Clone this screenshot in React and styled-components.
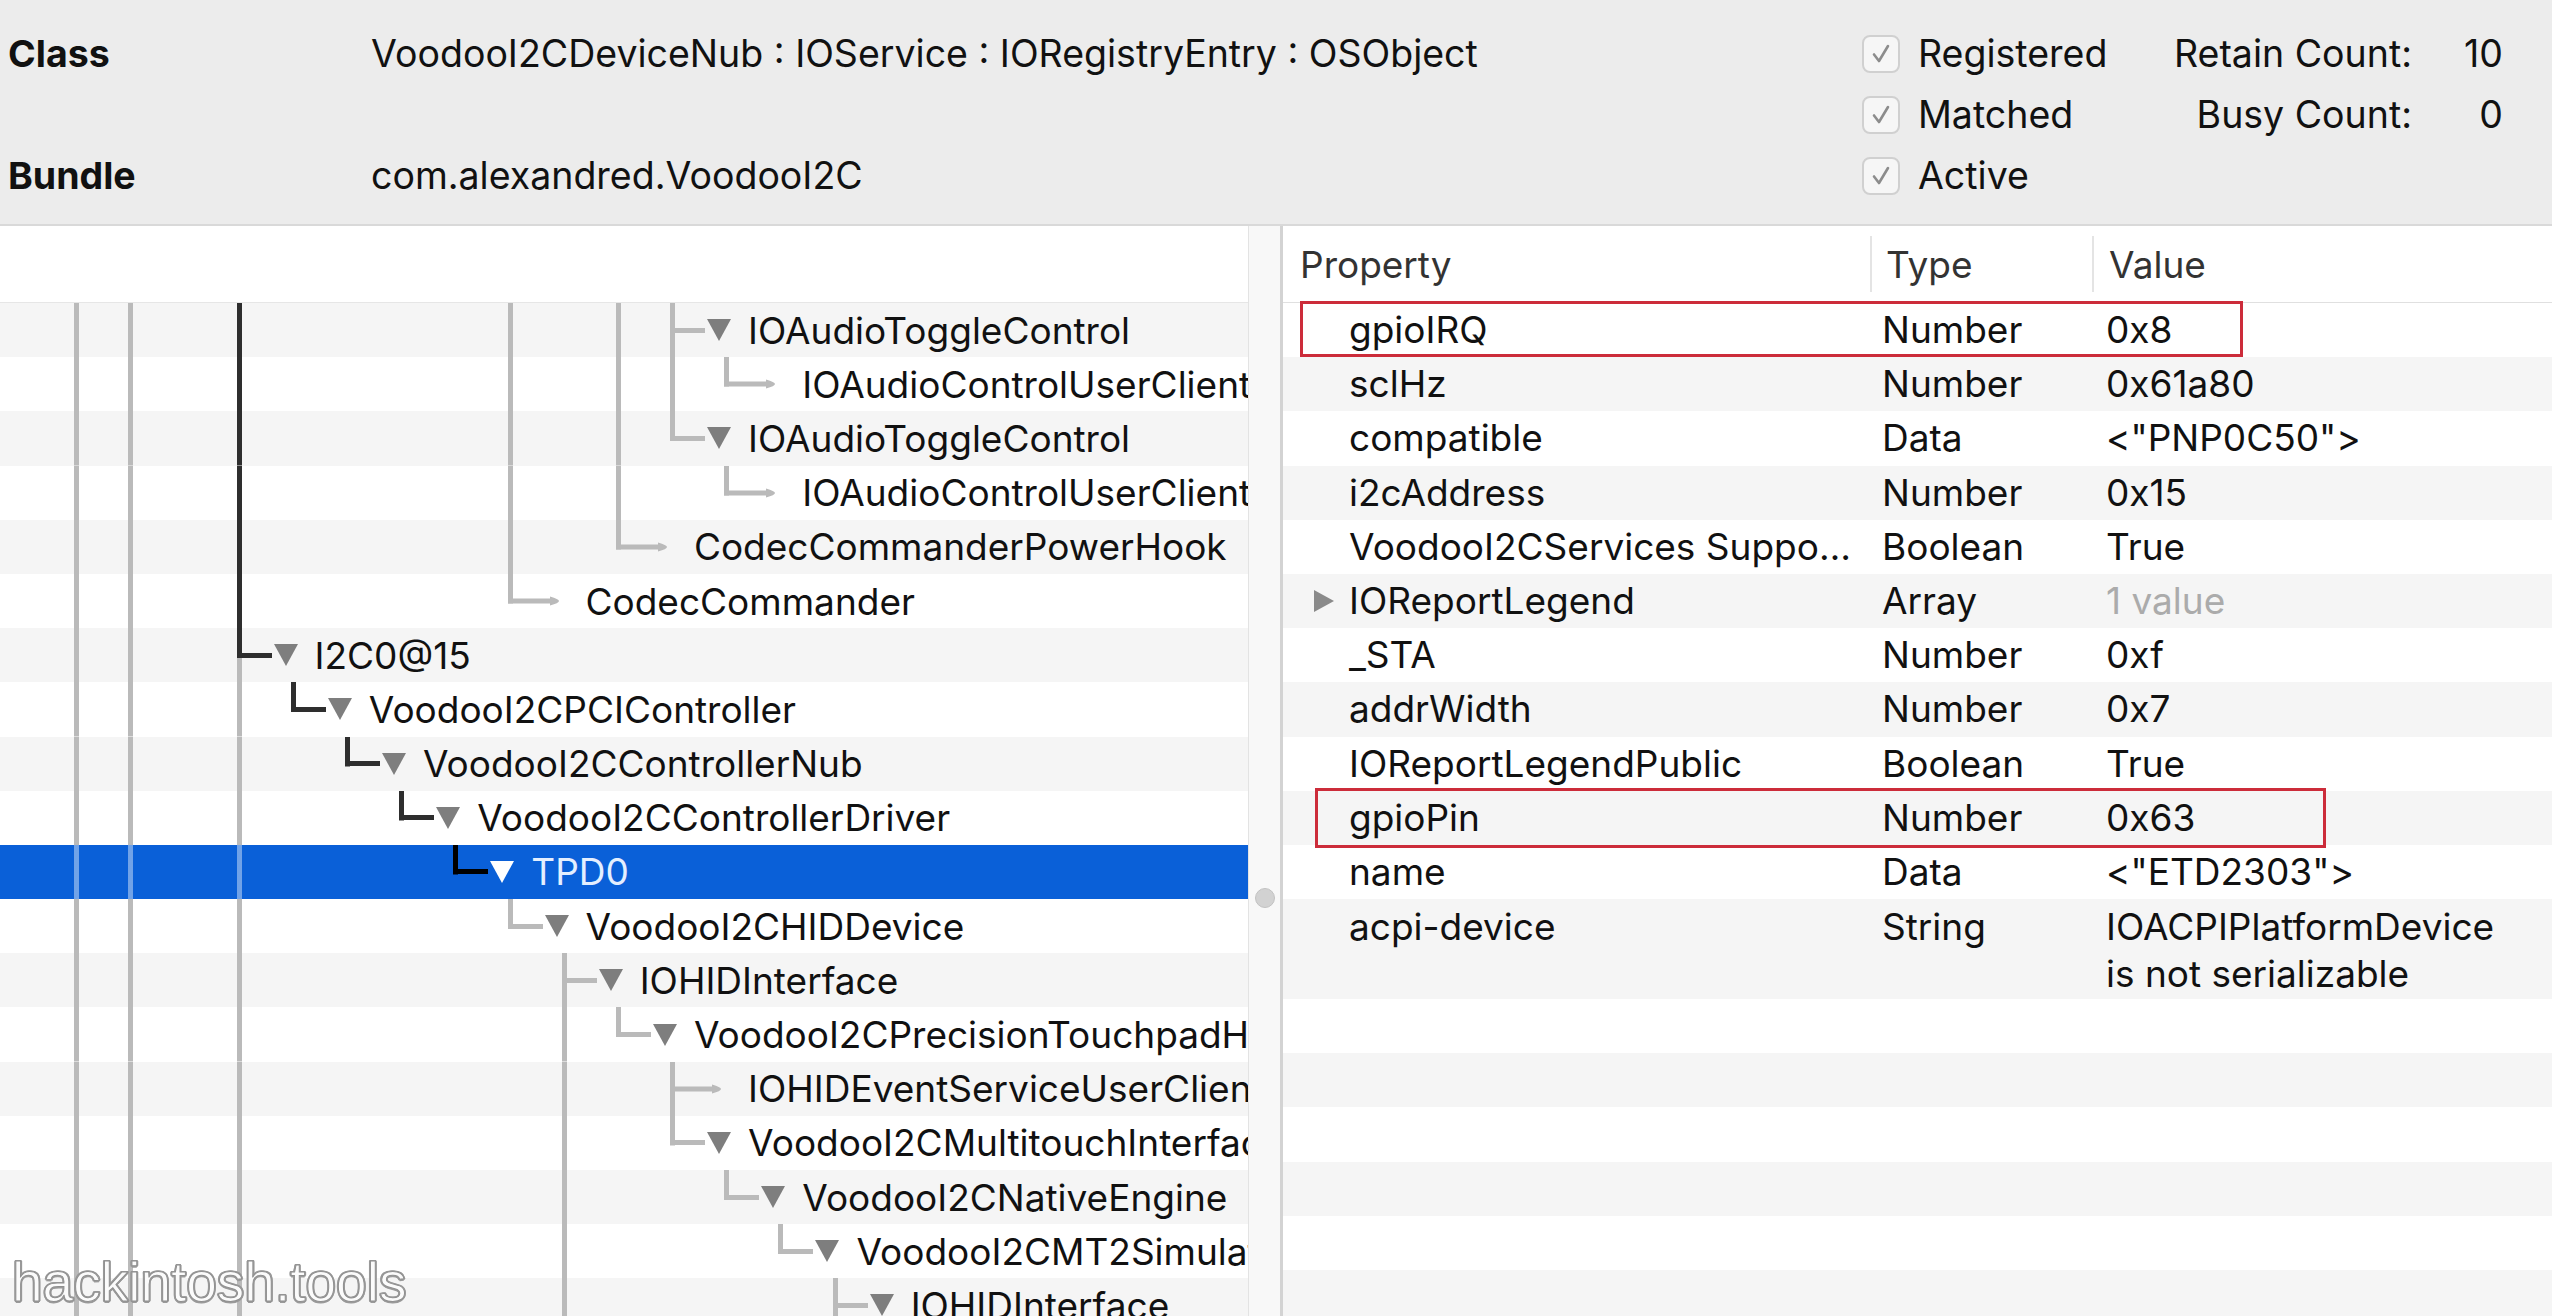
import React from 'react';
import styled, { createGlobalStyle } from 'styled-components';

const FONT = `Inter, "Liberation Sans", Arial, sans-serif`;
const ROW = 54.2;
const INDENT = 54.2;
const GRAY = '#bababa';
const DARK = '#2e2e2e';
const SEL_GRAY = 'rgba(255,255,255,0.42)';
const SEL_BLUE = '#0a60d8';
const STRIPE = '#f5f5f5';

const Global = createGlobalStyle`
  html, body { margin: 0; padding: 0; background: #fff; }
  body { width: 2552px; height: 1316px; overflow: hidden; font-family: ${FONT}; }
  * { box-sizing: border-box; }
`;

const Window = styled.div`
  position: relative;
  width: 2552px;
  height: 1316px;
  display: flex;
  flex-direction: column;
  overflow: hidden;
  font-family: ${FONT};
  font-size: 37px;
  color: #111;
`;

/* ---------- Info bar ---------- */
const InfoBar = styled.header`
  flex: none;
  height: 226px;
  background: #ececec;
  border-bottom: 2px solid #d9d9d9;
  display: grid;
  grid-template-columns: 363px 1fr 280px 270px 91px;
  grid-template-rows: repeat(3, 61px);
  align-items: center;
  padding: 23px 49px 0 8px;
  font-size: 37.5px;
`;

const InfoCell = styled.div`
  grid-row: ${p => p.$row};
  grid-column: ${p => p.$col};
  white-space: nowrap;
  font-weight: ${p => (p.$bold ? 700 : 400)};
  text-align: ${p => p.$align || 'left'};
`;

const CheckItem = styled.div`
  grid-row: ${p => p.$row};
  grid-column: 3;
  display: flex;
  align-items: center;
  gap: 18px;
  white-space: nowrap;
`;

const CheckBox = styled.span`
  flex: none;
  width: 38px;
  height: 38px;
  border-radius: 8px;
  border: 2px solid #d0d0d0;
  background: #f6f6f6;
  display: flex;
  align-items: center;
  justify-content: center;
`;

const Check = () => (
  <CheckBox>
    <svg width="26" height="26" viewBox="0 0 26 26">
      <path d="M6 13.5 L11 20 L20 5" fill="none" stroke="#8c8c8c" strokeWidth="2.6" strokeLinecap="round" strokeLinejoin="round" />
    </svg>
  </CheckBox>
);

/* ---------- Body ---------- */
const Body = styled.div`
  flex: 1;
  display: flex;
  min-height: 0;
`;

const TreePane = styled.section`
  flex: none;
  width: 1248px;
  display: flex;
  flex-direction: column;
  background: #fff;
  overflow: hidden;
`;

const PaneHeader = styled.div`
  flex: none;
  height: 77px;
  background: #fff;
  border-bottom: 1px solid #e6e6e6;
`;

const TreeBody = styled.div`
  flex: 1;
  display: flex;
  flex-direction: column;
  overflow: hidden;
`;

const TreeRow = styled.div`
  flex: none;
  height: ${ROW}px;
  display: flex;
  align-items: stretch;
  padding-left: 74px;
  white-space: nowrap;
  background: ${p => (p.$selected ? SEL_BLUE : p.$stripe ? STRIPE : '#fff')};
`;

const guideBg = ({ $top, $bottom, $elbow }) => {
  const layers = [];
  if ($top) layers.push(`linear-gradient(${$top}, ${$top}) 0 0 / 5px ${$elbow ? 'calc(50% + 2.5px)' : '50%'} no-repeat`);
  if ($bottom) layers.push(`linear-gradient(${$bottom}, ${$bottom}) 0 100% / 5px 50% no-repeat`);
  return layers.length ? layers.join(', ') : 'none';
};

const Guide = styled.span`
  flex: none;
  width: ${INDENT}px;
  background: ${guideBg};
`;

const Connector = styled.span`
  flex: none;
  width: 78px;
  display: flex;
  align-items: center;
  background: ${guideBg};
`;

const HLine = styled.span`
  flex: none;
  width: 35px;
  height: 5px;
  background: ${p => p.$color};
`;

const DisclosureSvg = styled.svg`
  flex: none;
  margin-left: 1px;
`;

const Disclosure = ({ selected }) => (
  <DisclosureSvg width="26" height="24" viewBox="0 0 26 24">
    <polygon points="1,1 25,1 13,23" fill={selected ? '#ffffff' : '#7e7e7e'} />
  </DisclosureSvg>
);

const LeafTip = ({ color }) => (
  <svg width="52" height="16" viewBox="0 0 52 16">
    <path d="M0 5.5 H42 V3.5 Q51 6 51 8 Q51 10 42 12.5 V10.5 H0 Z" fill={color} />
  </svg>
);

const NodeLabel = styled.span`
  align-self: center;
  color: ${p => (p.$selected ? '#e4efff' : '#111')};
`;

const Splitter = styled.div`
  flex: none;
  width: 35px;
  background: #f8f8f8;
  border-left: 1px solid #e3e3e3;
  border-right: 3px solid #d3d3d3;
  display: flex;
  flex-direction: column;
  align-items: center;
  padding-top: 662px;
`;

const Handle = styled.span`
  width: 20px;
  height: 20px;
  border-radius: 50%;
  background: #d2d2d2;
  border: 1px solid #c2c2c2;
`;

/* ---------- Properties ---------- */
const PropsPane = styled.section`
  flex: 1;
  display: flex;
  flex-direction: column;
  background: #fff;
  overflow: hidden;
`;

const COLS = '587px 222px 1fr';

const PropsHeader = styled.div`
  flex: none;
  height: 77px;
  display: grid;
  grid-template-columns: ${COLS};
  align-items: center;
  border-bottom: 1px solid #e0e0e0;
  color: #333;
`;

const HeadCell = styled.div`
  height: 56px;
  display: flex;
  align-items: center;
  padding-left: ${p => p.$pad}px;
  border-left: ${p => (p.$divider ? '2px solid #e4e4e4' : 'none')};
`;

const PropsBody = styled.div`
  position: relative;
  flex: 1;
  display: flex;
  flex-direction: column;
`;

const PropRow = styled.div`
  flex: none;
  display: grid;
  grid-template-columns: ${COLS};
  height: ${p => (p.$tall ? 100 : ROW)}px;
  padding-top: ${p => (p.$tall ? 4 : 0)}px;
  line-height: ${p => (p.$tall ? '47px' : `${ROW}px`)};
  background: ${p => (p.$stripe ? STRIPE : '#fff')};
  white-space: nowrap;
`;

const NameCell = styled.div`
  display: flex;
  align-items: flex-start;
  padding-left: 30px;
  overflow: hidden;
`;

const ToggleSlot = styled.span`
  flex: none;
  width: 36px;
  height: ${ROW}px;
  display: flex;
  align-items: center;
`;

const TypeCell = styled.div`
  padding-left: 12px;
`;

const ValueCell = styled.div`
  padding-left: 14px;
  color: ${p => (p.$muted ? '#ababab' : '#111')};
`;

const Highlight = styled.div`
  position: absolute;
  left: ${p => p.$x}px;
  top: ${p => p.$y}px;
  width: ${p => p.$w}px;
  height: ${p => p.$h}px;
  border: 3px solid #cc2c3a;
  pointer-events: none;
`;

const Watermark = styled.div`
  position: absolute;
  left: 12px;
  top: 1250px;
  font-family: "Liberation Sans", Arial, sans-serif;
  font-size: 55px;
  color: #fbfbfb;
  -webkit-text-stroke: 1px #8f8f8f;
  text-shadow:
    1.5px 0 0 #9a9a9a, -1.5px 0 0 #9a9a9a, 0 1.5px 0 #9a9a9a, 0 -1.5px 0 #9a9a9a,
    1.1px 1.1px 0 #9a9a9a, -1.1px 1.1px 0 #9a9a9a, 1.1px -1.1px 0 #9a9a9a, -1.1px -1.1px 0 #9a9a9a;
  white-space: nowrap;
`;

/* ---------- Data ---------- */
const base = { 0: 'g', 1: 'g' };
const rows = [
  { k: 11, open: true, text: 'IOAudioToggleControl', g: { ...base, 3: 'd', 8: 'g', 10: 'g' }, c: ['g', 'g', 'g'] },
  { k: 12, open: false, text: 'IOAudioControlUserClient', g: { ...base, 3: 'd', 8: 'g', 10: 'g', 11: 'g' }, c: ['g', null, 'g'] },
  { k: 11, open: true, text: 'IOAudioToggleControl', g: { ...base, 3: 'd', 8: 'g', 10: 'g' }, c: ['g', null, 'g'] },
  { k: 12, open: false, text: 'IOAudioControlUserClient', g: { ...base, 3: 'd', 8: 'g', 10: 'g' }, c: ['g', null, 'g'] },
  { k: 10, open: false, text: 'CodecCommanderPowerHook', g: { ...base, 3: 'd', 8: 'g' }, c: ['g', null, 'g'] },
  { k: 8, open: false, text: 'CodecCommander', g: { ...base, 3: 'd' }, c: ['g', null, 'g'] },
  { k: 3, open: true, text: 'I2C0@15', g: { ...base }, c: ['d', 'g', 'd'] },
  { k: 4, open: true, text: 'VoodooI2CPCIController', g: { ...base, 3: 'g' }, c: ['d', null, 'd'] },
  { k: 5, open: true, text: 'VoodooI2CControllerNub', g: { ...base, 3: 'g' }, c: ['d', null, 'd'] },
  { k: 6, open: true, text: 'VoodooI2CControllerDriver', g: { ...base, 3: 'g' }, c: ['d', null, 'd'] },
  { k: 7, open: true, text: 'TPD0', selected: true, g: { ...base, 3: 'g' }, c: ['k', null, 'k'] },
  { k: 8, open: true, text: 'VoodooI2CHIDDevice', g: { ...base, 3: 'g' }, c: ['g', null, 'g'] },
  { k: 9, open: true, text: 'IOHIDInterface', g: { ...base, 3: 'g' }, c: ['g', 'g', 'g'] },
  { k: 10, open: true, text: 'VoodooI2CPrecisionTouchpadHIDEventDriver', g: { ...base, 3: 'g', 9: 'g' }, c: ['g', null, 'g'] },
  { k: 11, open: false, text: 'IOHIDEventServiceUserClient', g: { ...base, 3: 'g', 9: 'g' }, c: ['g', 'g', 'g'] },
  { k: 11, open: true, text: 'VoodooI2CMultitouchInterface', g: { ...base, 3: 'g', 9: 'g' }, c: ['g', null, 'g'] },
  { k: 12, open: true, text: 'VoodooI2CNativeEngine', g: { ...base, 3: 'g', 9: 'g' }, c: ['g', null, 'g'] },
  { k: 13, open: true, text: 'VoodooI2CMT2SimulatorDevice', g: { ...base, 3: 'g', 9: 'g' }, c: ['g', null, 'g'] },
  { k: 14, open: true, text: 'IOHIDInterface', g: { ...base, 3: 'g', 9: 'g' }, c: ['g', 'g', 'g'] },
];

const properties = [
  { name: 'gpioIRQ', type: 'Number', value: '0x8' },
  { name: 'sclHz', type: 'Number', value: '0x61a80' },
  { name: 'compatible', type: 'Data', value: '<"PNP0C50">' },
  { name: 'i2cAddress', type: 'Number', value: '0x15' },
  { name: 'VoodooI2CServices Suppo…', type: 'Boolean', value: 'True' },
  { name: 'IOReportLegend', type: 'Array', value: '1 value', muted: true, expandable: true },
  { name: '_STA', type: 'Number', value: '0xf' },
  { name: 'addrWidth', type: 'Number', value: '0x7' },
  { name: 'IOReportLegendPublic', type: 'Boolean', value: 'True' },
  { name: 'gpioPin', type: 'Number', value: '0x63' },
  { name: 'name', type: 'Data', value: '<"ETD2303">' },
  { name: 'acpi-device', type: 'String', value: ['IOACPIPlatformDevice', 'is not serializable'] },
];

const TreeLine = ({ row, index }) => {
  const sel = !!row.selected;
  const col = key =>
    key === 'g' ? (sel ? SEL_GRAY : GRAY) : key === 'd' ? DARK : key === 'k' ? '#000' : null;
  const guides = [];
  for (let i = 0; i < row.k; i++) {
    const c = col(row.g[i]);
    guides.push(<Guide key={i} $top={c} $bottom={c} />);
  }
  const [t, b, h] = row.c;
  return (
    <TreeRow $stripe={index % 2 === 0} $selected={sel}>
      {guides}
      <Connector $top={col(t)} $bottom={col(b)} $elbow={!b}>
        {row.open ? (
          <>
            <HLine $color={col(h)} />
            <Disclosure selected={sel} />
          </>
        ) : (
          <LeafTip color={col(h)} />
        )}
      </Connector>
      <NodeLabel $selected={sel}>{row.text}</NodeLabel>
    </TreeRow>
  );
};

export default function App() {
  return (
    <Window>
      <Global />
      <InfoBar>
        <InfoCell $row={1} $col={1} $bold>Class</InfoCell>
        <InfoCell $row={1} $col={2}>VoodooI2CDeviceNub : IOService : IORegistryEntry : OSObject</InfoCell>
        <InfoCell $row={3} $col={1} $bold>Bundle</InfoCell>
        <InfoCell $row={3} $col={2}>com.alexandred.VoodooI2C</InfoCell>
        <CheckItem $row={1}><Check />Registered</CheckItem>
        <CheckItem $row={2}><Check />Matched</CheckItem>
        <CheckItem $row={3}><Check />Active</CheckItem>
        <InfoCell $row={1} $col={4} $align="right">Retain Count:</InfoCell>
        <InfoCell $row={1} $col={5} $align="right">10</InfoCell>
        <InfoCell $row={2} $col={4} $align="right">Busy Count:</InfoCell>
        <InfoCell $row={2} $col={5} $align="right">0</InfoCell>
      </InfoBar>
      <Body>
        <TreePane>
          <PaneHeader />
          <TreeBody>
            {rows.map((r, i) => (
              <TreeLine key={i} row={r} index={i} />
            ))}
          </TreeBody>
        </TreePane>
        <Splitter>
          <Handle />
        </Splitter>
        <PropsPane>
          <PropsHeader>
            <HeadCell $pad={17}>Property</HeadCell>
            <HeadCell $pad={14} $divider>Type</HeadCell>
            <HeadCell $pad={15} $divider>Value</HeadCell>
          </PropsHeader>
          <PropsBody>
            {properties.map((p, i) => (
              <PropRow key={p.name} $stripe={i % 2 === 1} $tall={Array.isArray(p.value)}>
                <NameCell>
                  <ToggleSlot>
                    {p.expandable && (
                      <svg width="22" height="24" viewBox="0 0 22 24">
                        <polygon points="1,1 21,12 1,23" fill="#8a8a8a" />
                      </svg>
                    )}
                  </ToggleSlot>
                  {p.name}
                </NameCell>
                <TypeCell>{p.type}</TypeCell>
                <ValueCell $muted={p.muted}>
                  {Array.isArray(p.value) ? (
                    <>
                      {p.value[0]}
                      <br />
                      {p.value[1]}
                    </>
                  ) : (
                    p.value
                  )}
                </ValueCell>
              </PropRow>
            ))}
            {[0, 1, 2, 3, 4, 5].map(i => (
              <PropRow key={`f${i}`} $stripe={i % 2 === 1} />
            ))}
            <Highlight $x={17} $y={-2} $w={943} $h={56} />
            <Highlight $x={32} $y={485} $w={1011} $h={60} />
          </PropsBody>
        </PropsPane>
      </Body>
      <Watermark>hackintosh.tools</Watermark>
    </Window>
  );
}
